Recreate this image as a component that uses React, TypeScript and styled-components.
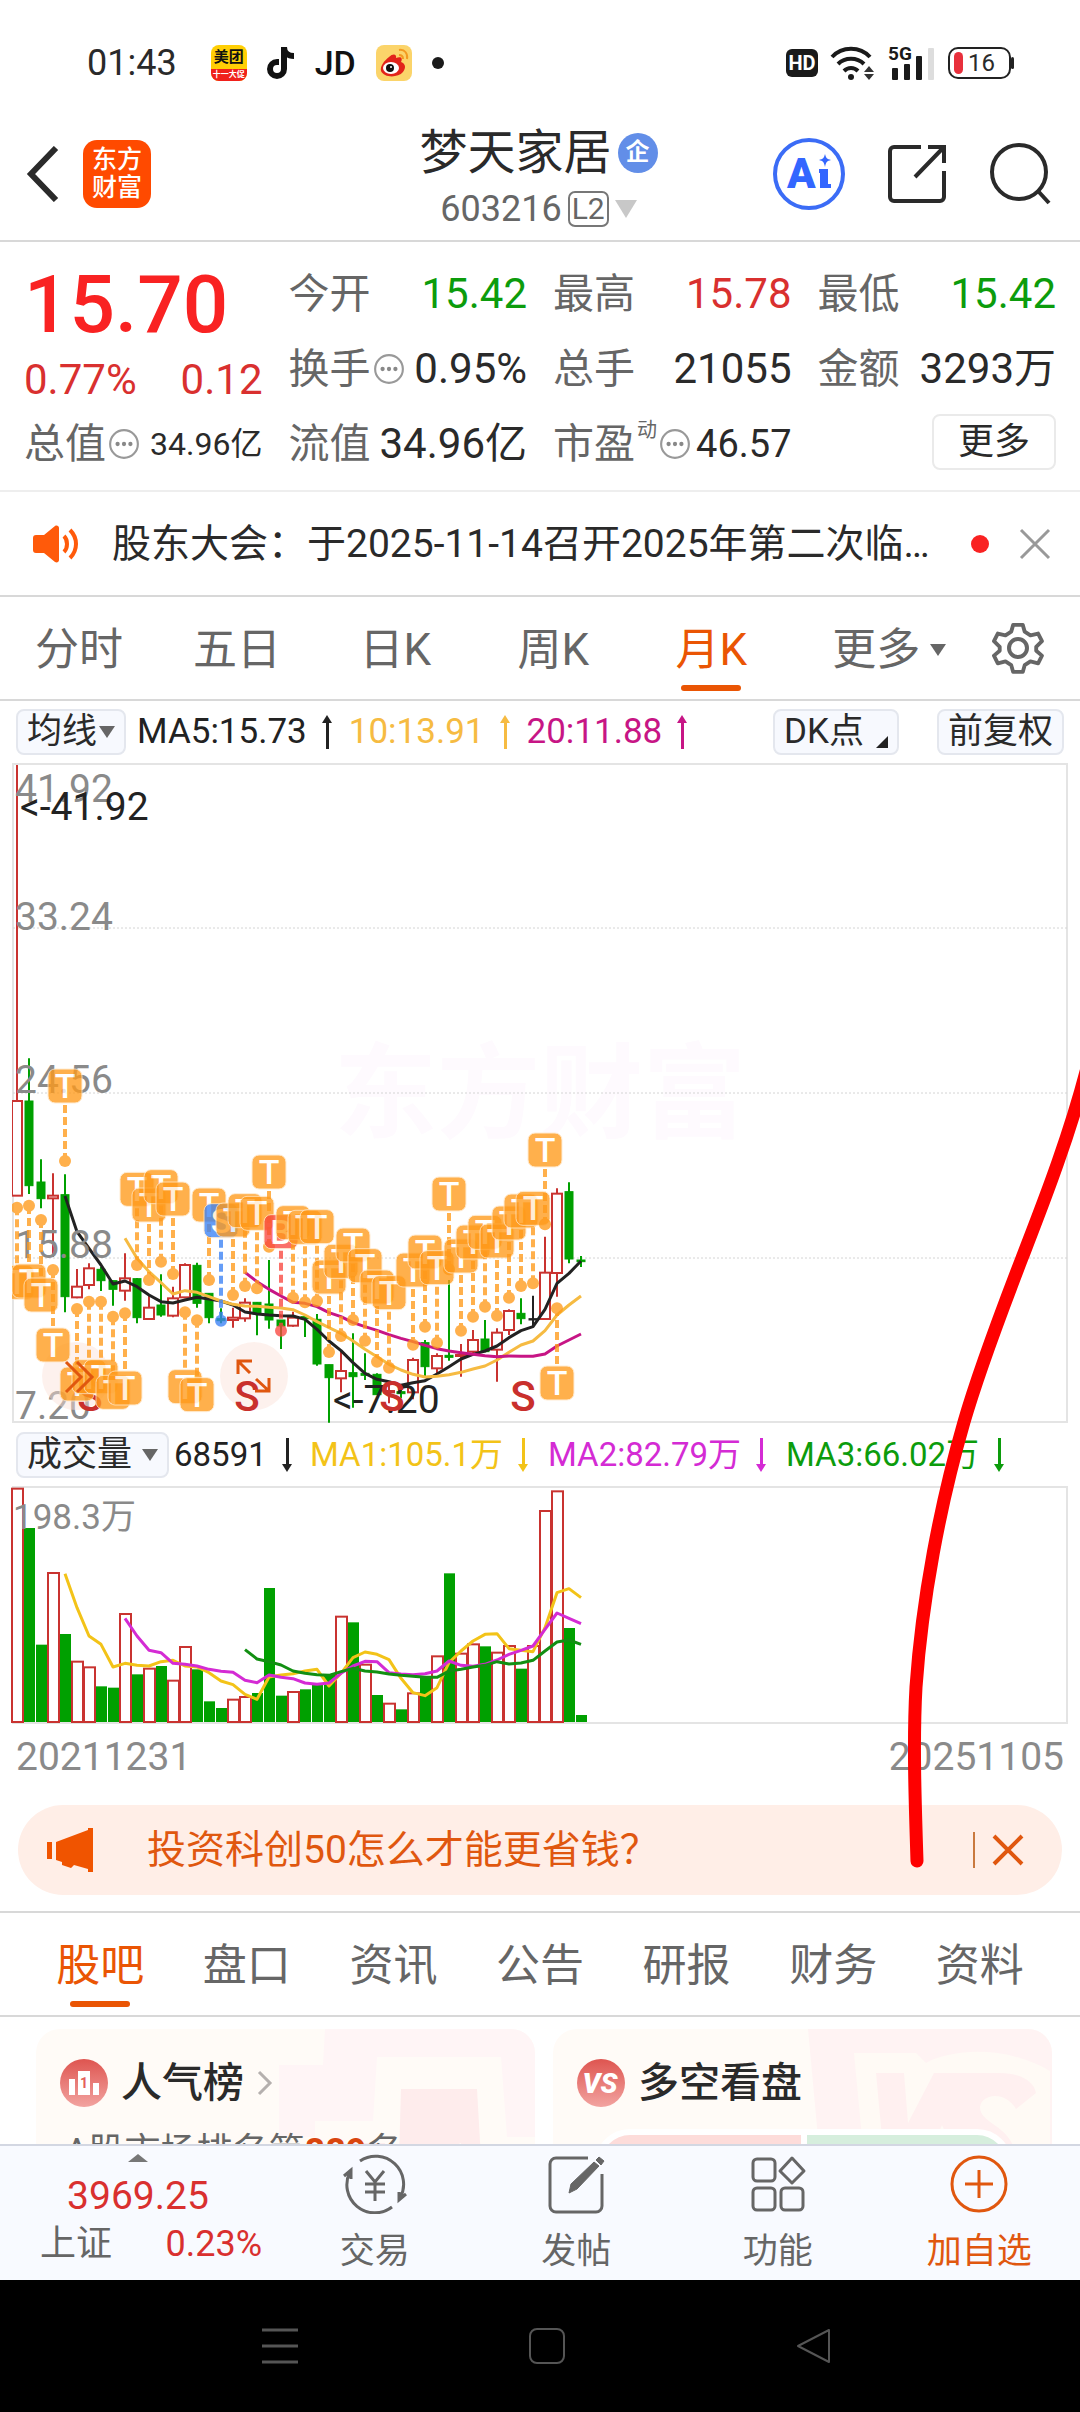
import React from "react";
import styled, { createGlobalStyle, css } from "styled-components";

const GlobalStyle = createGlobalStyle`
  * { box-sizing: border-box; }
  body { margin: 0; background: #fff; }
  button {
    margin: 0; padding: 0; border: 0; background: none;
    font: inherit; color: inherit; cursor: pointer;
  }
  h1, h2, p, dl, dt, dd { margin: 0; font-weight: 400; }
  svg { display: block; flex: none; }
`;

const C = {
  ink: "#2a2a2a",
  grey: "#666",
  line: "#d8d8d8",
  orange: "#ea5504",
  red: "#d9302f",
  green: "#0c9c0c",
};

const Page = styled.div`
  position: relative;
  display: flex;
  flex-direction: column;
  height: 100vh;
  overflow: hidden;
  background: #fff;
  color: ${C.ink};
  font-family: Roboto, "Noto Sans CJK SC", sans-serif;
  font-size: 36px;
  line-height: 48px;
`;

/* ---------- status bar ---------- */

const StatusBar = styled.div`
  display: flex;
  flex: none;
  align-items: center;
  justify-content: space-between;
  height: 104px;
  padding: 22px 66px 0 87px;
`;
const StatusGroup = styled.div<{ $gap: number }>`
  display: flex;
  align-items: center;
  gap: ${(p) => p.$gap}px;
`;
const Clock = styled.span`
  margin-right: 14px;
`;
const MeituanIcon = styled.span`
  display: flex;
  flex-direction: column;
  width: 36px;
  height: 36px;
  border-radius: 8px;
  overflow: hidden;
  background: #ffcf05;
  text-align: center;
  font-size: 15px;
  font-weight: 700;
  line-height: 24px;
  color: #111;
  white-space: nowrap;
`;
const MeituanStrip = styled.span`
  background: #f0201c;
  color: #fff;
  font-size: 8px;
  line-height: 12px;
`;
const JdText = styled.span`
  color: #111;
  font-size: 34px;
  font-weight: 500;
`;
const Dot = styled.span<{ $size: number; $color: string }>`
  flex: none;
  width: ${(p) => p.$size}px;
  height: ${(p) => p.$size}px;
  border-radius: 50%;
  background: ${(p) => p.$color};
`;
const HdTag = styled.span`
  width: 32px;
  border-radius: 6px;
  background: #1a1a1a;
  color: #fff;
  text-align: center;
  font-size: 20px;
  font-weight: 700;
  line-height: 28px;
`;
const Battery = styled.span`
  display: flex;
  align-items: center;
  gap: 5px;
  width: 63px;
  height: 32px;
  padding: 0 4px;
  border: 2px solid #222;
  border-radius: 10px;
  font-size: 24px;
  line-height: 28px;
`;
const BatteryTip = styled.span`
  width: 3px;
  height: 12px;
  margin-left: -12px;
  border-radius: 2px;
  background: #222;
`;
const BatteryLevel = styled.span`
  width: 9px;
  height: 22px;
  border-radius: 5px;
  background: #e8303c;
`;

/* ---------- header ---------- */

const Header = styled.header`
  display: grid;
  grid-template-columns: 1fr auto 1fr;
  flex: none;
  align-items: center;
  height: 138px;
  padding: 4px 29px 0 26px;
  border-bottom: 2px solid ${C.line};
`;
const HeaderSide = styled.div<{ $end?: boolean }>`
  display: flex;
  align-items: center;
  gap: ${(p) => (p.$end ? 43 : 23)}px;
  justify-content: ${(p) => (p.$end ? "flex-end" : "flex-start")};
`;
const Brand = styled.button`
  width: 68px;
  height: 68px;
  border-radius: 14px;
  background: #ff4a00;
  color: #fff;
  font-size: 25px;
  font-weight: 500;
  line-height: 28px;
`;
const Titles = styled.div`
  display: flex;
  flex-direction: column;
  align-items: center;
  padding-top: 14px;
  line-height: 56px;
`;
const TitleLine = styled.div`
  display: flex;
  align-items: center;
  gap: 6px;
  color: ${C.grey};
`;
const StockName = styled.h1`
  color: ${C.ink};
  font-size: 48px;
`;
const EnterpriseBadge = styled.span`
  width: 40px;
  height: 40px;
  border-radius: 50%;
  background: #628ee8;
  color: #fff;
  text-align: center;
  font-size: 24px;
  font-weight: 700;
  line-height: 38px;
`;
const LevelBadge = styled.span`
  padding: 0 2px;
  border: 2px solid #777;
  border-radius: 7px;
  font-size: 30px;
  line-height: 32px;
`;
const Triangle = styled.span<{ $size: number; $color: string; $up?: boolean }>`
  width: 0;
  height: 0;
  border: solid transparent;
  border-width: 0 ${(p) => p.$size / 2}px;
  ${(p) =>
    p.$up
      ? css`border-bottom: 8px solid ${p.$color};`
      : css`border-top: ${p.$size - 4}px solid ${p.$color};`}
`;

/* ---------- quote figures ---------- */

const Quote = styled.section`
  display: grid;
  grid-template-columns: repeat(4, 1fr);
  gap: 26px;
  flex: none;
  padding: 14px 24px 9px;
  border-bottom: 2px solid #eee;
`;
const QuoteColumn = styled.dl`
  display: flex;
  flex-direction: column;
  min-width: 0;
`;
const Stat = styled.div<{ $height?: number }>`
  display: flex;
  align-items: center;
  justify-content: space-between;
  height: ${(p) => p.$height ?? 75}px;
  white-space: nowrap;
`;
const StatLabel = styled.dt`
  display: flex;
  align-items: center;
  gap: 2px;
  color: ${C.grey};
  font-size: 41px;
`;
const StatValue = styled.dd<{ $color?: string; $size?: number }>`
  color: ${(p) => p.$color ?? C.ink};
  font-size: ${(p) => p.$size ?? 42}px;
`;
const Price = styled.p`
  height: 98px;
  color: #f92222;
  font-size: 80px;
  font-weight: 500;
  line-height: 98px;
`;
const Raised = styled.sup`
  align-self: flex-start;
  font-size: 20px;
  line-height: 20px;
`;
const MoreFigures = styled.button`
  align-self: flex-end;
  width: 124px;
  height: 56px;
  margin-top: 8px;
  border: 2px solid #eaeaea;
  border-radius: 8px;
`;

/* ---------- notice ---------- */

const Notice = styled.section`
  display: flex;
  flex: none;
  align-items: center;
  height: 105px;
  padding: 0 29px 0 33px;
  border-bottom: 2px solid ${C.line};
  font-size: 39px;
`;
const NoticeText = styled.p`
  flex: 1;
  min-width: 0;
  margin: 0 30px 0 33px;
  overflow: hidden;
  text-overflow: ellipsis;
  white-space: nowrap;
`;
const NoticeEnd = styled.div`
  display: flex;
  align-items: center;
  gap: 30px;
`;

/* ---------- tabs ---------- */

const TabBar = styled.nav<{ $inset?: number }>`
  display: flex;
  flex: none;
  height: 104px;
  padding: 0 ${(p) => p.$inset ?? 0}px;
  border-bottom: 2px solid ${C.line};
`;
const Tab = styled.button<{ $active?: boolean; $grow?: number }>`
  display: flex;
  flex: ${(p) => p.$grow ?? 1};
  align-items: center;
  justify-content: center;
  gap: 10px;
  padding-top: 4px;
  color: ${(p) => (p.$active ? C.orange : C.grey)};
  font-size: 44px;
  white-space: nowrap;
  ${(p) =>
    p.$active &&
    css`
      position: relative;
      &::after {
        content: "";
        position: absolute;
        bottom: 8px;
        width: 60px;
        height: 6px;
        border-radius: 3px;
        background: ${C.orange};
      }
    `}
`;
const GearButton = styled.button`
  display: flex;
  align-items: center;
  justify-content: center;
  width: 92px;
  padding-right: 32px;
`;

/* ---------- indicator rows and charts ---------- */

const Indicators = styled.div`
  display: flex;
  flex: none;
  align-items: center;
  height: 62px;
  padding: 0 16px;
  font-size: 35px;
  white-space: nowrap;
`;
const Pill = styled.button<{ $gap?: number }>`
  display: flex;
  align-items: center;
  gap: ${(p) => p.$gap ?? 2}px;
  height: 46px;
  padding: 0 9px;
  border: 2px solid #e4e7ee;
  border-radius: 8px;
  background: #f7f9fe;
`;
const Averages = styled.div`
  display: flex;
  flex: 1;
  gap: 16px;
  margin-left: 11px;
`;
const VolumeAverages = styled.div`
  display: grid;
  flex: 1;
  grid-template-columns: 136px repeat(3, 238px);
  margin-left: 5px;
  font-size: 33px;
`;
const Average = styled.span<{ $color: string }>`
  display: flex;
  align-items: center;
  gap: 14px;
  color: ${(p) => p.$color};
`;
const PillGroup = styled.div`
  display: flex;
  gap: 38px;
`;
const Corner = styled.span`
  align-self: flex-end;
  margin-bottom: 5px;
  border: solid transparent;
  border-width: 6px;
  border-right-color: #222;
  border-bottom-color: #222;
`;
const ChartSvg = styled.svg`
  width: 100%;
  height: auto;
  font-family: Roboto, "Noto Sans CJK SC", sans-serif;
`;
const Dates = styled.div`
  display: flex;
  flex: none;
  justify-content: space-between;
  padding: 8px 16px 24px;
  color: #8a8a8a;
  font-size: 39px;
`;

/* ---------- promotion ---------- */

const Promo = styled.section`
  display: flex;
  flex: none;
  align-items: center;
  height: 90px;
  margin: 0 18px 16px;
  padding: 0 38px 0 29px;
  border-radius: 45px;
  background: #ffeee7;
  color: #e0570f;
  font-size: 39px;
`;
const PromoText = styled.p`
  flex: 1;
  margin-left: 54px;
`;
const PromoClose = styled.button`
  display: flex;
  align-items: center;
  height: 36px;
  padding-left: 17px;
  border-left: 2px solid #c9793f;
`;
const LowerTabs = styled.div`
  flex: none;
  border-top: 2px solid ${C.line};
`;

/* ---------- cards ---------- */

const Cards = styled.section`
  display: grid;
  grid-template-columns: 1fr 1fr;
  gap: 18px;
  flex: 1;
  min-height: 0;
  padding: 12px 28px 0 36px;
  overflow: hidden;
`;
const Card = styled.article`
  position: relative;
  height: 260px;
  padding: 28px 24px;
  border-radius: 24px;
  overflow: hidden;
  background: #fffbf7;
`;
const CardArt = styled.svg`
  position: absolute;
  top: 0;
  right: 0;
`;
const CardHead = styled.div`
  position: relative;
  display: flex;
  align-items: center;
  gap: 13px;
  height: 52px;
`;
const CardTitle = styled.h2`
  font-size: 41px;
  font-weight: 500;
`;
const CardText = styled.p`
  position: relative;
  margin-top: 19px;
  padding-left: 5px;
  color: ${C.grey};
`;
const Rank = styled.strong`
  color: #d9460f;
`;
const VoteBar = styled.div`
  position: relative;
  display: flex;
  gap: 6px;
  height: 70px;
  margin: 20px 16px 0 18px;
  border: 6px solid #fff;
  border-radius: 36px;
  overflow: hidden;
  background: #fff;
`;
const Vote = styled.span<{ $color: string }>`
  flex: 1;
  background: ${(p) => p.$color};
`;

/* ---------- bottom bars ---------- */

const ActionBar = styled.nav`
  display: flex;
  flex: none;
  height: 136px;
  border-top: 2px solid #d3d7e2;
  background: #f8faff;
  color: ${C.grey};
`;
const IndexPanel = styled.button`
  display: flex;
  flex-direction: column;
  align-items: center;
  width: 274px;
  padding: 8px 12px 0 40px;
`;
const IndexSummary = styled.span`
  display: flex;
  flex-direction: column;
  align-items: center;
  gap: 10px;
  margin-right: 26px;
  color: ${C.red};
  font-size: 39px;
`;
const IndexRow = styled.span`
  display: flex;
  justify-content: space-between;
  width: 100%;
`;
const Change = styled.span`
  color: ${C.red};
`;
const Action = styled.button<{ $accent?: boolean }>`
  display: flex;
  flex: 1;
  flex-direction: column;
  align-items: center;
  gap: 14px;
  padding-top: 8px;
  color: ${(p) => (p.$accent ? "#e0570f" : C.grey)};
  font-size: 35px;
`;
const SystemNav = styled.nav`
  display: grid;
  grid-template-columns: 36px 36px 36px;
  justify-content: center;
  align-items: center;
  gap: 231px;
  flex: none;
  height: 132px;
  padding-left: 14px;
  background: #000;
`;
const Overlay = styled.svg`
  position: absolute;
  top: 0;
  left: 0;
  width: 100%;
  pointer-events: none;
`;

/* ---------- chart data ---------- */

const STEP = 12;
const X0 = 17;
const cx = (i: number) => X0 + STEP * i;
/* levels are stored in thirds of a pixel below the top of each plot */
const py = (v: number) => 1040 + v / 3;
const vy = (v: number) => 1420 + v / 3;

type Kind = "r" | "g" | "k";
/* [kind, body top, body bottom, wick top, wick bottom] */
const candles: [Kind, number, number, number, number][] = [
  ["r", 180, 470, -825, 180], ["g", 183, 437, 55, 462], ["g", 426, 476, 358, 505],
  ["r", 464, 478, 400, 650], ["g", 464, 770, 403, 817], ["r", 737, 775, 687, 775],
  ["r", 682, 738, 670, 748], ["g", 688, 722, 680, 753], ["g", 722, 748, 722, 797],
  ["r", 712, 755, 640, 782], ["g", 716, 833, 714, 850], ["r", 800, 840, 762, 840],
  ["g", 795, 825, 703, 830], ["r", 772, 830, 740, 832], ["r", 672, 775, 670, 775],
  ["g", 676, 790, 668, 803], ["g", 760, 833, 760, 850], ["g", 836, 842, 805, 850],
  ["r", 830, 843, 803, 863], ["r", 785, 838, 775, 845], ["g", 787, 822, 787, 886],
  ["g", 792, 840, 660, 866], ["g", 840, 858, 840, 927], ["r", 830, 860, 815, 860],
  ["g", 830, 836, 830, 891], ["g", 838, 972, 822, 977], ["g", 974, 1013, 974, 1148],
  ["r", 990, 1018, 932, 1057], ["g", 998, 1010, 880, 1103], ["g", 1000, 1006, 940, 1020],
  ["g", 1003, 1064, 1000, 1064], ["r", 1050, 1060, 1035, 1090], ["g", 1055, 1061, 1045, 1075],
  ["r", 957, 1060, 953, 1078], ["g", 908, 980, 900, 1010], ["r", 945, 988, 940, 1000],
  ["g", 946, 952, 720, 962], ["r", 942, 950, 912, 1010], ["r", 897, 938, 870, 940],
  ["g", 897, 935, 840, 937], ["r", 875, 932, 865, 1025], ["r", 810, 873, 808, 885],
  ["g", 820, 836, 775, 853], ["k", 836, 840, 767, 862], ["r", 695, 840, 590, 840],
  ["r", 458, 702, 445, 770], ["g", 455, 657, 427, 670], ["g", 660, 665, 648, 681],
];

/* [candle index, dot level, badge level, letter] */
const marks: [number, number, number, string][] = [
  [0, 503, 727, "T"], [1, 497, 723, "T"], [2, 540, 765, "T"], [3, 690, 915, "T"],
  [4, 363, 138, "T"], [5, 807, 1032, "T"], [6, 785, 1010, "T"], [7, 785, 1010, "T"],
  [8, 830, 1057, "T"], [9, 820, 1044, "T"], [10, 675, 448, "T"], [11, 720, 495, "T"],
  [12, 665, 440, "T"], [13, 702, 477, "T"], [14, 817, 1040, "T"], [15, 841, 1064, "T"],
  [16, 720, 495, "T"], [17, 842, 542, "S"], [18, 765, 540, "T"], [19, 738, 512, "T"],
  [20, 745, 520, "T"], [21, 620, 396, "T"], [22, 872, 575, "B"], [23, 773, 548, "T"],
  [24, 787, 562, "T"], [25, 783, 560, "T"], [26, 936, 711, "T"], [27, 888, 664, "T"],
  [28, 840, 615, "T"], [29, 902, 677, "T"], [30, 965, 741, "T"], [31, 983, 758, "T"],
  [33, 914, 690, "T"], [34, 860, 636, "T"], [35, 908, 683, "T"], [36, 688, 462, "T"],
  [37, 872, 648, "T"], [38, 830, 606, "T"], [39, 800, 577, "T"], [40, 827, 603, "T"],
  [41, 773, 549, "T"], [42, 738, 513, "T"], [43, 730, 505, "T"], [44, 553, 330, "T"],
  [45, 805, 1029, "T"],
];
const markColor: Record<string, string> = { T: "#ff9a1a", S: "#3b82f6", B: "#f9473f" };

const ma5 = [468, 575, 625, 675, 732, 723, 740, 765, 785, 789, 780, 772, 777, 783, 795, 816, 822, 825, 827, 828, 838, 868, 903, 932, 968, 1000, 1018, 1025, 1036, 1028, 1022, 1002, 980, 957, 943, 933, 918, 893, 872, 860, 808, 730, 700, 663];
const ma10 = [595, 655, 695, 728, 762, 752, 757, 770, 783, 793, 798, 799, 802, 804, 809, 825, 845, 863, 880, 903, 928, 950, 973, 990, 1003, 1011, 1009, 1004, 997, 987, 978, 960, 937, 915, 903, 872, 825, 795, 768];
const ma20 = [697, 725, 748, 768, 787, 790, 800, 818, 830, 848, 860, 871, 884, 895, 905, 916, 926, 933, 938, 943, 947, 950, 948, 949, 949, 942, 918, 900, 882];

const volumes = [200, 321, 671, 453, 639, 719, 736, 796, 800, 576, 760, 740, 735, 776, 675, 745, 841, 861, 833, 825, 816, 501, 824, 810, 805, 792, 762, 584, 604, 728, 822, 845, 865, 814, 768, 703, 457, 695, 667, 676, 692, 672, 743, 672, 267, 208, 621, 882];
const volumeRed = new Set([0, 3, 5, 6, 9, 11, 13, 14, 18, 19, 23, 27, 29, 31, 33, 35, 37, 38, 40, 41, 43, 44, 45]);
const vma1 = [458, 560, 645, 670, 738, 727, 733, 735, 722, 718, 735, 738, 755, 780, 791, 820, 835, 768, 762, 758, 750, 745, 795, 757, 710, 693, 700, 716, 772, 815, 824, 800, 725, 690, 660, 640, 638, 683, 688, 692, 620, 515, 503, 530];
const vma2 = [592, 645, 688, 695, 727, 730, 735, 745, 751, 754, 778, 785, 762, 769, 773, 786, 790, 786, 757, 735, 721, 722, 755, 759, 761, 758, 750, 720, 733, 736, 730, 717, 700, 688, 675, 625, 576, 592, 608];
const vma3 = [686, 714, 722, 732, 750, 757, 761, 763, 752, 742, 750, 753, 759, 763, 766, 769, 769, 750, 745, 738, 733, 722, 729, 726, 718, 690, 663, 657, 670];

const linePoints = (values: number[], y: (v: number) => number) => {
  const start = candles.length - values.length;
  return values.map((v, i) => `${cx(start + i)},${y(v)}`).join(" ");
};

const candleColor: Record<Kind, string> = { r: "#c93330", g: "#00a000", k: "#222" };

function Candle({ index }: { index: number }) {
  const [kind, top, bottom, high, low] = candles[index];
  const color = candleColor[kind];
  const x = cx(index);
  const hollow = kind === "r";
  return (
    <g stroke={color}>
      <line x1={x} x2={x} y1={py(high)} y2={py(low)} strokeWidth={2} />
      <rect
        x={x - (hollow ? 5 : 4)}
        y={py(top) + (hollow ? 1 : 0)}
        width={hollow ? 10 : 8}
        height={Math.max(1, (bottom - top) / 3 - (hollow ? 2 : 0))}
        fill={hollow ? "#fff" : color}
        strokeWidth={hollow ? 2 : 1}
      />
    </g>
  );
}

function Mark({ mark }: { mark: [number, number, number, string] }) {
  const [index, dot, badge, letter] = mark;
  const x = cx(index);
  const color = markColor[letter];
  const edge = badge < dot ? badge + 57 : badge - 57;
  return (
    <g opacity={0.78}>
      <line x1={x} x2={x} y1={py(edge)} y2={py(dot)} stroke={color} strokeWidth={4} strokeDasharray="8 4" />
      <circle cx={x} cy={py(dot)} r={6} fill={color} />
      <rect x={x - 17} y={py(badge) - 17} width={34} height={34} rx={7} fill={color} stroke="#ffe8c8" strokeWidth={1} />
      <text x={x} y={py(badge) + 12} textAnchor="middle" fontSize={34} fontWeight={500} fill="#fff">
        {letter}
      </text>
    </g>
  );
}

function PriceChart() {
  return (
    <ChartSvg viewBox="0 763 1080 661" role="img" aria-label="月K线图">
      <defs>
        <clipPath id="plot"><rect x="12" y="763" width="1056" height="661" /></clipPath>
      </defs>
      <text x="540" y="1130" textAnchor="middle" fontSize="103" fontWeight="700" fill="#fefafe">东方财富</text>
      <rect x="13" y="764" width="1054" height="658" fill="none" stroke="#e4e4e4" strokeWidth="2" />
      <g stroke="#d4d4d4" strokeWidth="1" strokeDasharray="2 2">
        {[928, 1093, 1258].map((y) => <line key={y} x1="13" x2="1067" y1={y} y2={y} />)}
      </g>
      <g clipPath="url(#plot)">
        {candles.map((_, i) => <Candle key={i} index={i} />)}
        <g fill="none" strokeWidth="3" strokeLinejoin="round">
          <polyline points={linePoints(ma5, py)} stroke="#222" />
          <polyline points={linePoints(ma10, py)} stroke="#f6bb42" />
          <polyline points={linePoints(ma20, py)} stroke="#c71585" />
        </g>
        <g fontSize="39" fill="#8a8a8a">
          <text x="15" y="802">41.92</text>
          <text x="15" y="930">33.24</text>
          <text x="15" y="1093">24.56</text>
          <text x="15" y="1258">15.88</text>
          <text x="15" y="1419">7.20</text>
        </g>
        <g fontSize="39" fill="#222">
          <text x="20" y="820">&lt;-41.92</text>
          <text x="333" y="1413">&lt;-7.20</text>
        </g>
        <g fill="#fbe0d8" fillOpacity="0.45">
          <circle cx="76" cy="1376" r="34" />
          <circle cx="254" cy="1376" r="34" />
        </g>
        <g fontSize="42" fontWeight="500" fill="#c9302c" textAnchor="middle">
          {[90, 247, 392, 523].map((x) => <text key={x} x={x} y="1411">S</text>)}
        </g>
        {marks.map((m) => <Mark key={m[0]} mark={m} />)}
      </g>
      <g fill="none" stroke="#e0570f" strokeWidth="3">
        <path d="M66 1362l15 15-15 15M77 1362l15 15-15 15" />
        <path d="M238 1374v-13h14M238 1361l12 12M269 1378v13h-14M269 1391l-13-12" />
      </g>
    </ChartSvg>
  );
}

function VolumeChart() {
  return (
    <ChartSvg viewBox="0 1485 1080 239" role="img" aria-label="成交量图">
      <rect x="13" y="1486" width="1054" height="236" fill="none" stroke="#e4e4e4" strokeWidth="2" />
      {volumes.map((v, i) => {
        const red = volumeRed.has(i);
        const top = vy(v);
        return red ? (
          <rect key={i} x={cx(i) - 5} y={top + 1} width={11} height={1720 - top} fill="#fff" stroke="#c93330" strokeWidth={2} />
        ) : (
          <rect key={i} x={cx(i) - 5} y={top} width={11} height={1721 - top} fill="#00a000" />
        );
      })}
      <g fill="none" strokeWidth="3" strokeLinejoin="round">
        <polyline points={linePoints(vma1, vy)} stroke="#f3c318" />
        <polyline points={linePoints(vma2, vy)} stroke="#d42bd4" />
        <polyline points={linePoints(vma3, vy)} stroke="#128f12" />
      </g>
      <text x="13" y="1528" fontSize="35" fill="#8a8a8a">198.3万</text>
    </ChartSvg>
  );
}

/* ---------- icons ---------- */

function Arrow({ down }: { down?: boolean }) {
  return (
    <svg width="12" height="34" viewBox="0 0 12 34" fill="currentColor">
      <path d={down ? "M5 0h3v26h3l-5 8-5-8h4z" : "M5 34h3V8h3L6 0 1 8h4z"} />
    </svg>
  );
}

function InfoDots() {
  return (
    <svg width="32" height="32" viewBox="0 0 30 30">
      <circle cx="15" cy="15" r="13" fill="none" stroke="#999" strokeWidth="2" />
      <g fill="#888"><circle cx="9" cy="15" r="2" /><circle cx="15" cy="15" r="2" /><circle cx="21" cy="15" r="2" /></g>
    </svg>
  );
}

function Cross({ color, width }: { color: string; width: number }) {
  return (
    <svg width="32" height="32" viewBox="0 0 32 32" fill="none" stroke={color} strokeWidth={width}>
      <path d="M2 2l28 28M30 2L2 30" />
    </svg>
  );
}

function TikTokIcon() {
  return (
    <svg width="28" height="34" viewBox="0 0 28 34" fill="none" stroke="#111" strokeWidth="6">
      <path d="M17 1v22a7 7 0 1 1-7-7h2" />
      <path d="M17 1c0 6 4 9 10 9" />
    </svg>
  );
}

function WeiboIcon() {
  return (
    <svg width="36" height="36" viewBox="0 0 36 36">
      <rect width="36" height="36" rx="8" fill="#fbd46a" />
      <path d="M13 12c4-4 8-3 7 1 5-2 7 0 5 4 5 2 5 6 2 10-5 6-19 6-22-1-1-5 3-10 8-14z" fill="#e2231a" />
      <ellipse cx="15" cy="23" rx="8" ry="6" fill="#fff" />
      <circle cx="14" cy="23" r="4" fill="#111" />
      <circle cx="15" cy="22" r="1" fill="#fff" />
      <path d="M23 5c6-1 9 4 8 9M23 10c3 0 4 2 4 4" fill="none" stroke="#f39a20" strokeWidth="2" />
    </svg>
  );
}

function WifiIcon() {
  return (
    <svg width="46" height="34" viewBox="0 0 46 34" fill="none" stroke="#1a1a1a" strokeWidth="4">
      <path d="M2 11c10-11 28-11 38 0M8 18c7-7 19-7 26 0M14 25c4-4 10-4 14 0" />
      <circle cx="21" cy="31" r="3" fill="#1a1a1a" stroke="none" />
      <path d="M39 20l5 6H34zM39 34l5-6H34z" fill="#333" stroke="none" />
    </svg>
  );
}

function SignalIcon() {
  return (
    <svg width="48" height="36" viewBox="0 0 48 36" fontFamily="Roboto, sans-serif">
      <text x="0" y="15" fontSize="19" fontWeight="700" fill="#1a1a1a">5G</text>
      <g fill="#1a1a1a"><rect x="4" y="23" width="6" height="12" rx="1" /><rect x="16" y="19" width="6" height="16" rx="1" /><rect x="28" y="11" width="6" height="24" rx="1" /></g>
      <rect x="40" y="3" width="6" height="32" rx="1" fill="#ddd" />
    </svg>
  );
}

function AiIcon() {
  return (
    <svg width="72" height="72" viewBox="0 0 72 72" fontFamily="Roboto, sans-serif">
      <circle cx="36" cy="36" r="34" fill="none" stroke="#3b6cf6" strokeWidth="4" />
      <text x="14" y="50" fontSize="42" fontWeight="900" fill="#3366ff">A</text>
      <path d="M46 31h9v15h3v4H47V35h-1z" fill="#3366ff" />
      <path d="M52 16c1 4 2 5 6 6-4 1-5 2-6 7-1-5-2-6-6-7 4-1 5-2 6-6z" fill="#3366ff" />
    </svg>
  );
}

function PopularIcon() {
  return (
    <svg width="48" height="48" viewBox="0 0 48 48">
      <defs>
        <linearGradient id="disc" x1="0" y1="0" x2="0" y2="1">
          <stop offset="0" stopColor="#de5550" /><stop offset="1" stopColor="#f2a3a0" />
        </linearGradient>
      </defs>
      <circle cx="24" cy="24" r="24" fill="url(#disc)" />
      <path d="M9 20h6v16H9zM18 12h12v24H18zM33 24h6v12h-6z" fill="#fff" />
      <text x="24" y="29" fontSize="14" fontWeight="700" textAnchor="middle" fill="#e4605a" fontFamily="Roboto, sans-serif">1</text>
    </svg>
  );
}

function VersusIcon() {
  return (
    <svg width="48" height="48" viewBox="0 0 48 48">
      <circle cx="24" cy="24" r="24" fill="url(#disc)" />
      <text x="23" y="34" fontSize="28" fontWeight="900" fontStyle="italic" textAnchor="middle" fill="#fff" fontFamily="Roboto, sans-serif">VS</text>
    </svg>
  );
}

/* ---------- page ---------- */

const periods = ["分时", "五日", "日K", "周K", "月K"];
const sections = ["股吧", "盘口", "资讯", "公告", "研报", "财务", "资料"];

export default function App() {
  return (
    <>
      <GlobalStyle />
      <Page>
        <StatusBar>
          <StatusGroup $gap={20}>
            <Clock>01:43</Clock>
            <MeituanIcon>美团<MeituanStrip>十一大促</MeituanStrip></MeituanIcon>
            <TikTokIcon />
            <JdText>JD</JdText>
            <WeiboIcon />
            <Dot $size={12} $color="#1a1a1a" />
          </StatusGroup>
          <StatusGroup $gap={12}>
            <HdTag>HD</HdTag>
            <WifiIcon />
            <SignalIcon />
            <Battery><BatteryLevel />16</Battery>
            <BatteryTip />
          </StatusGroup>
        </StatusBar>

        <Header>
          <HeaderSide>
            <button aria-label="返回">
              <svg width="34" height="56" viewBox="0 0 34 56" fill="none" stroke="#2a2a2a" strokeWidth="6">
                <path d="M30 2L5 28l25 26" />
              </svg>
            </button>
            <Brand>东方<br />财富</Brand>
          </HeaderSide>
          <Titles>
            <TitleLine><StockName>梦天家居</StockName><EnterpriseBadge>企</EnterpriseBadge></TitleLine>
            <TitleLine>603216<LevelBadge>L2</LevelBadge><Triangle $size={22} $color="#c8c8c8" /></TitleLine>
          </Titles>
          <HeaderSide $end>
            <button aria-label="智能助手"><AiIcon /></button>
            <button aria-label="分享">
              <svg width="58" height="58" viewBox="0 0 58 58" fill="none" stroke="#2a2a2a" strokeWidth="4">
                <path d="M33 2H6a4 4 0 0 0-4 4v46a4 4 0 0 0 4 4h46a4 4 0 0 0 4-4V26M40 2h16v16M56 2L27 32" />
              </svg>
            </button>
            <button aria-label="搜索">
              <svg width="62" height="62" viewBox="0 0 62 62" fill="none" stroke="#2a2a2a" strokeWidth="4">
                <circle cx="30" cy="29" r="27" /><path d="M49 48l11 12" />
              </svg>
            </button>
          </HeaderSide>
        </Header>

        <Quote>
          <QuoteColumn as="div">
            <Price>15.70</Price>
            <Stat as="p" $height={52}>
              <StatValue as="span" $color={C.red}>0.77%</StatValue>
              <StatValue as="span" $color={C.red}>0.12</StatValue>
            </Stat>
            <Stat as="p">
              <StatLabel as="span">总值<InfoDots /></StatLabel>
              <StatValue as="span" $size={32}>34.96亿</StatValue>
            </Stat>
          </QuoteColumn>
          <QuoteColumn>
            <Stat><StatLabel>今开</StatLabel><StatValue $color={C.green}>15.42</StatValue></Stat>
            <Stat><StatLabel>换手<InfoDots /></StatLabel><StatValue>0.95%</StatValue></Stat>
            <Stat><StatLabel>流值</StatLabel><StatValue>34.96亿</StatValue></Stat>
          </QuoteColumn>
          <QuoteColumn>
            <Stat><StatLabel>最高</StatLabel><StatValue $color={C.red}>15.78</StatValue></Stat>
            <Stat><StatLabel>总手</StatLabel><StatValue>21055</StatValue></Stat>
            <Stat><StatLabel>市盈<Raised>动</Raised><InfoDots /></StatLabel><StatValue $size={38}>46.57</StatValue></Stat>
          </QuoteColumn>
          <QuoteColumn as="div">
            <Stat as="p"><StatLabel as="span">最低</StatLabel><StatValue as="span" $color={C.green}>15.42</StatValue></Stat>
            <Stat as="p"><StatLabel as="span">金额</StatLabel><StatValue as="span">3293万</StatValue></Stat>
            <MoreFigures>更多</MoreFigures>
          </QuoteColumn>
        </Quote>

        <Notice>
          <svg width="46" height="38" viewBox="0 0 46 38">
            <path d="M3 10h8L22 1c2-1 4 0 4 2v32c0 2-2 3-4 2l-11-9H3c-2 0-3-1-3-3V13c0-2 1-3 3-3z" fill="#ff5a0a" />
            <path d="M31 11c4 4 4 12 0 16M37 5c8 8 8 20 0 28" fill="none" stroke="#ff5a0a" strokeWidth="4" />
          </svg>
          <NoticeText>股东大会：于2025-11-14召开2025年第二次临时股东大会</NoticeText>
          <NoticeEnd>
            <Dot $size={18} $color="#f92222" />
            <button aria-label="关闭公告"><Cross color="#999" width={3} /></button>
          </NoticeEnd>
        </Notice>

        <TabBar>
          {periods.map((name) => <Tab key={name} $active={name === "月K"}>{name}</Tab>)}
          <Tab $grow={1.25}>更多<Triangle $size={16} $color={C.grey} /></Tab>
          <GearButton aria-label="设置">
            <svg width="52" height="54" viewBox="0 0 52 54" fill="none" stroke={C.grey} strokeWidth="4" strokeLinejoin="round">
              <path d="M21 3h10l2 7 6 4 8-2 4 8-6 6v4l6 5-4 8-8-2-6 4-2 7H21l-2-7-6-4-8 2-4-8 6-5v-4l-6-6 4-8 8 2 6-4z" transform="translate(1 1) scale(0.96)" />
              <circle cx="26" cy="27" r="9" />
            </svg>
          </GearButton>
        </TabBar>

        <Indicators>
          <Pill>均线<Triangle $size={16} $color={C.grey} /></Pill>
          <Averages>
            <Average $color="#222">MA5:15.73<Arrow /></Average>
            <Average $color="#f6bb42">10:13.91<Arrow /></Average>
            <Average $color="#c71585">20:11.88<Arrow /></Average>
          </Averages>
          <PillGroup>
            <Pill $gap={12}>DK点<Corner /></Pill>
            <Pill>前复权</Pill>
          </PillGroup>
        </Indicators>
        <PriceChart />
        <Indicators>
          <Pill $gap={10}>成交量<Triangle $size={16} $color={C.grey} /></Pill>
          <VolumeAverages>
            <Average $color="#222">68591<Arrow down /></Average>
            <Average $color="#f3c318">MA1:105.1万<Arrow down /></Average>
            <Average $color="#d42bd4">MA2:82.79万<Arrow down /></Average>
            <Average $color={C.green}>MA3:66.02万<Arrow down /></Average>
          </VolumeAverages>
        </Indicators>
        <VolumeChart />
        <Dates><span>20211231</span><span>20251105</span></Dates>

        <Promo>
          <svg width="46" height="46" viewBox="0 0 46 46" fill="#f05400">
            <path d="M0 15h5v17H0zM9 15l32-12V1h5v44h-5v-3l-14-4-3 3-9-3v-3l-6-2z" />
          </svg>
          <PromoText>投资科创50怎么才能更省钱？</PromoText>
          <PromoClose aria-label="关闭"><Cross color="#e0570f" width={4} /></PromoClose>
        </Promo>

        <LowerTabs>
          <TabBar as="nav" $inset={27}>
            {sections.map((name) => <Tab key={name} $active={name === "股吧"}>{name}</Tab>)}
          </TabBar>
        </LowerTabs>

        <Cards>
          <Card>
            <CardArt width="256" height="130" viewBox="0 0 256 130">
              <path d="M46 0h210v108h-28L222 28H98l-4 64H36v16H0V36h44z" fill="#fff5f6" />
              <path d="M122 60h76l4 70h-20V114l-24 10v6h-38z" fill="#feecec" />
              <path d="M70 114h36v16H70z" fill="#feeded" />
            </CardArt>
            <CardHead>
              <PopularIcon />
              <CardTitle>人气榜</CardTitle>
              <svg width="16" height="26" viewBox="0 0 16 26" fill="none" stroke="#b5b0ae" strokeWidth="3"><path d="M2 2l11 11L2 24" /></svg>
            </CardHead>
            <CardText>A股市场排名第<Rank>889</Rank>名</CardText>
          </Card>
          <Card>
            <CardArt width="244" height="130" viewBox="0 0 244 130">
              <path d="M0 0h244v130H12z" fill="#fff3f3" />
              <path d="M46 24h62l10 10c30-16 84-16 124 8v88H56z" fill="#fffaf5" />
              <path d="M68 44h28l4 50 26-50h66c20 0 34 8 36 20l-20 16c-10-18-34-16-36-2 0 18 34 18 36 52h-60l-14-34-14 34H76z" fill="#fff0f0" />
            </CardArt>
            <CardHead>
              <VersusIcon />
              <CardTitle>多空看盘</CardTitle>
            </CardHead>
            <VoteBar><Vote $color="#fddcda" /><Vote $color="#d6eedd" /></VoteBar>
          </Card>
        </Cards>

        <ActionBar>
          <IndexPanel>
            <IndexSummary><Triangle $size={20} $color="#777" $up />3969.25</IndexSummary>
            <IndexRow><span>上证</span><Change>0.23%</Change></IndexRow>
          </IndexPanel>
          <Action>
            <svg width="66" height="60" viewBox="0 0 66 60" fill="none" stroke="currentColor" strokeWidth="3">
              <path d="M18 7A28 28 0 0 1 58 44M50 53A28 28 0 0 1 8 18M2 22l7-6v9M64 40l-7 6v-8" />
              <path d="M24 17l9 11 9-11M33 28v19M23 30h20M23 38h20" />
            </svg>
            交易
          </Action>
          <Action>
            <svg width="60" height="60" viewBox="0 0 60 60" fill="none" stroke="currentColor" strokeWidth="3">
              <path d="M42 4H10a6 6 0 0 0-6 6v42a6 6 0 0 0 6 6h40a6 6 0 0 0 6-6V20" />
              <path d="M23 39l2-9 23-22 5 4-22 23zM50 6l3-3 5 4-3 4z" fill="currentColor" strokeWidth="1" />
            </svg>
            发帖
          </Action>
          <Action>
            <svg width="60" height="60" viewBox="0 0 60 60" fill="none" stroke="currentColor" strokeWidth="3">
              <rect x="5" y="5" width="22" height="22" rx="4" />
              <rect x="5" y="34" width="22" height="22" rx="4" />
              <rect x="33" y="34" width="22" height="22" rx="4" />
              <path d="M44 4l12 13-12 12-12-12z" strokeLinejoin="round" />
            </svg>
            功能
          </Action>
          <Action $accent>
            <svg width="60" height="60" viewBox="0 0 60 60" fill="none" stroke="currentColor" strokeWidth="3">
              <circle cx="30" cy="30" r="27" /><path d="M30 16v28M16 30h28" />
            </svg>
            加自选
          </Action>
        </ActionBar>

        <SystemNav>
          <button aria-label="菜单">
            <svg width="36" height="36" viewBox="0 0 36 36" stroke="#555" strokeWidth="3"><path d="M0 2h36M0 18h36M0 34h36" /></svg>
          </button>
          <button aria-label="主屏幕">
            <svg width="36" height="36" viewBox="0 0 36 36" fill="none" stroke="#555" strokeWidth="2"><rect x="1" y="1" width="34" height="34" rx="7" /></svg>
          </button>
          <button aria-label="后退">
            <svg width="36" height="36" viewBox="0 0 36 36" fill="none" stroke="#555" strokeWidth="2" strokeLinejoin="round"><path d="M33 2v32L2 18z" /></svg>
          </button>
        </SystemNav>

        <Overlay viewBox="0 0 1080 2412" aria-hidden="true">
          <path
            d="M1090 1056C1072 1130 1043 1204 1022 1258C1000 1315 979 1370 964 1422C940 1505 922 1600 916 1687C913 1740 915 1800 917 1861"
            fill="none" stroke="#fe0000" strokeWidth="13" strokeLinecap="round"
          />
        </Overlay>
      </Page>
    </>
  );
}
